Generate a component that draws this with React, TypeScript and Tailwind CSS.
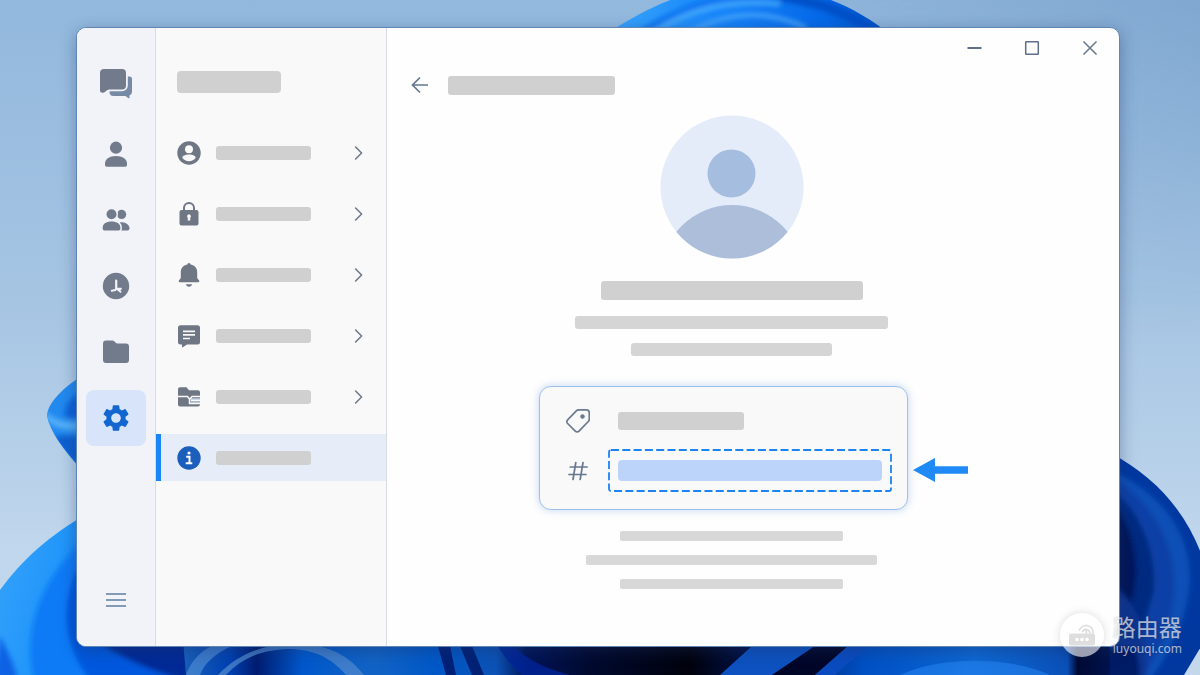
import React from "react";
import { MdSettings } from "react-icons/md";

function Wallpaper() {
  return (
    <svg
      className="absolute inset-0 h-full w-full"
      viewBox="0 0 1200 675"
      preserveAspectRatio="xMidYMid slice"
      aria-hidden="true"
    >
      <defs>
        <linearGradient id="sky" x1="0" y1="0" x2="0" y2="1">
          <stop offset="0" stopColor="#92b8dd" />
          <stop offset="0.45" stopColor="#a6c5e3" />
          <stop offset="0.8" stopColor="#bfd6ec" />
          <stop offset="1" stopColor="#c4d8ec" />
        </linearGradient>
        <linearGradient id="skyRight" x1="0" y1="0" x2="1" y2="0">
          <stop offset="0.6" stopColor="#6d98c4" stopOpacity="0" />
          <stop offset="1" stopColor="#6d98c4" stopOpacity="0.5" />
        </linearGradient>
        <linearGradient id="skyFade" x1="0" y1="0" x2="0" y2="1">
          <stop offset="0" stopColor="#fff" />
          <stop offset="0.5" stopColor="#000" />
        </linearGradient>
        <mask id="skyMask">
          <rect width="1200" height="675" fill="url(#skyFade)" />
        </mask>
        <filter id="soft" x="-10%" y="-10%" width="120%" height="120%">
          <feGaussianBlur stdDeviation="2.5" />
        </filter>
        <clipPath id="topClip">
          <path d="M606 34C650 6 690-14 748-14C806-14 850 2 892 36Z" />
        </clipPath>
        <clipPath id="leftClip">
          <path d="M0 590C22 560 48 536 90 512L240 640V675H0Z" />
        </clipPath>
        <clipPath id="budClip">
          <path d="M80 377C60 390 47 405 47 416C50 432 64 450 80 468Z" />
        </clipPath>
        <clipPath id="rightClip">
          <path d="M1110 453C1155 476 1186 512 1202 556V645L1184 675H1110Z" />
        </clipPath>
        <linearGradient id="top" x1="0" y1="0" x2="1" y2="0">
          <stop offset="0" stopColor="#3ba8fc" />
          <stop offset="0.4" stopColor="#1684fa" />
          <stop offset="0.75" stopColor="#0468e8" />
          <stop offset="1" stopColor="#0050b8" />
        </linearGradient>
        <linearGradient id="left" x1="0" y1="0" x2="1" y2="0.2">
          <stop offset="0" stopColor="#37a4fb" />
          <stop offset="0.3" stopColor="#2296fa" />
          <stop offset="0.7" stopColor="#0058de" />
          <stop offset="1" stopColor="#002890" />
        </linearGradient>
        <linearGradient id="floor" x1="180" y1="0" x2="1200" y2="0" gradientUnits="userSpaceOnUse">
          <stop offset="0" stopColor="#1a62bc" />
          <stop offset="0.05" stopColor="#0040b0" />
          <stop offset="0.075" stopColor="#001c70" />
          <stop offset="0.12" stopColor="#0058cc" />
          <stop offset="0.19" stopColor="#1263c4" />
          <stop offset="0.25" stopColor="#0058c8" />
          <stop offset="0.31" stopColor="#0c52b4" />
          <stop offset="0.34" stopColor="#001458" />
          <stop offset="0.4" stopColor="#000a30" />
          <stop offset="0.5" stopColor="#00020c" />
          <stop offset="0.56" stopColor="#00124c" />
          <stop offset="0.67" stopColor="#0050c4" />
          <stop offset="0.78" stopColor="#0d68d4" />
          <stop offset="0.87" stopColor="#0a50b8" />
          <stop offset="0.88" stopColor="#000a34" />
          <stop offset="0.93" stopColor="#00185c" />
          <stop offset="1" stopColor="#0038a0" />
        </linearGradient>
      </defs>
      <rect width="1200" height="675" fill="url(#sky)" />
      <rect width="1200" height="675" fill="url(#skyRight)" mask="url(#skyMask)" />

      <g clipPath="url(#topClip)">
        <rect x="600" y="-20" width="300" height="60" fill="url(#top)" />
        <g filter="url(#soft)" fill="none">
          <path d="M640 34C680 6 720-6 770-4" stroke="#0a74f0" strokeWidth="6" />
          <path d="M650 34C690 8 730 0 780 4" stroke="#48adfc" strokeWidth="4" />
          <path d="M690 32C730 10 770 10 806 28" stroke="#48a6fa" strokeWidth="4" />
          <path d="M780-4C830 4 860 18 886 40" stroke="#0050c8" strokeWidth="10" />
        </g>
      </g>

      <g clipPath="url(#budClip)">
        <rect x="44" y="370" width="40" height="100" fill="#2289ee" />
        <g filter="url(#soft)">
          <path d="M80 392C68 400 62 410 66 418H84Z" fill="#0a62d8" />
          <path d="M44 418C56 430 68 431 84 429V422C68 424 54 420 46 412Z" fill="#55b0f8" />
          <path d="M54 436C66 436 74 434 84 438V470C68 458 60 448 54 436Z" fill="#0a5ed0" />
        </g>
      </g>

      <g clipPath="url(#leftClip)">
        <rect y="500" width="240" height="180" fill="url(#left)" />
        <g filter="url(#soft)">
          <path d="M84 540C40 580 22 630 34 680H200C120 660 74 620 84 540Z" fill="#0a7af6" />
          <path d="M84 555C58 600 62 645 90 680H240L200 640H90Z" fill="#0058de" />
          <path d="M95 640C130 664 160 672 180 680H245V636Z" fill="#002a96" />
          <path d="M0 636C8 652 14 664 18 680H-5Z" fill="#0a62e4" />
        </g>
      </g>

      <path d="M183 640H1120V675H186Z" fill="url(#floor)" />
      <path d="M186 675C190 664 198 652 212 646H232C214 654 204 664 200 675Z" fill="#4684d0" opacity="0.8" />
      <path d="M218 675C238 654 262 645 290 644H300C336 646 352 660 364 675H346C330 656 312 650 292 649C262 649 242 658 226 675Z" fill="#4a84cc" opacity="0.8" />
      <path d="M498 646C506 660 514 668 522 675H570C544 668 524 658 514 646Z" fill="#00249a" opacity="0.8" />
      <path d="M438 646L446 675H456L450 646ZM460 646L472 675H484L472 646Z" fill="#001464" opacity="0.8" />
      <path d="M720 675L752 646H815L772 675Z" fill="#0d52c0" />
      <path d="M772 675L815 646H848L815 675Z" fill="#000628" />
      <path d="M815 675L848 646H868L835 675Z" fill="#0a4cc0" />
      <path d="M900 675C940 656 1010 656 1050 675Z" fill="#2a8af6" opacity="0.5" />

      <g clipPath="url(#rightClip)">
        <rect x="1105" y="440" width="100" height="240" fill="#0038a0" />
        <g filter="url(#soft)">
          <path d="M1110 470C1160 492 1190 530 1190 580C1188 620 1168 655 1150 680H1110Z" fill="#0d4fb6" />
          <path d="M1110 476C1150 500 1176 540 1174 590C1172 625 1160 655 1140 680H1110Z" fill="#0840a6" />
          <path d="M1110 488C1140 510 1156 550 1154 590L1140 640H1110Z" fill="#002a80" />
          <path d="M1110 500C1134 524 1142 570 1130 606H1110Z" fill="#001258" />
          <path d="M1112 584C1138 605 1150 630 1146 680H1105V646Z" fill="#0a3490" />
          <path d="M1100 648H1134C1140 660 1140 670 1138 684H1100Z" fill="#001c66" />
        </g>
      </g>
    </svg>
  );
}

function ChatsIcon() {
  return (
    <svg className="h-8 w-8" viewBox="0 0 32 32" aria-hidden="true">
      <path
        d="M12 9.500h17.500a2.500 2.500 0 0 1 2.500 2.500v13a4 4 0 0 1-2.500 3.600v1.800c0 .8-.8 1.200-1.400.7L25.500 29H13.500a4 4 0 0 1-4-3.500z"
        fill="#778aa5"
      />
      <path
        d="M4 2h18a4 4 0 0 1 4 4v12.500a4 4 0 0 1-4 4H9.500c-2 0-3 1-4.300 2.300-.9.900-1.700 1-2.700 1C1.200 25.800 0 24.800 0 23.500V6a4 4 0 0 1 4-4z"
        fill="#727b8b"
        stroke="#f1f3f8"
        strokeWidth="3.600"
        paintOrder="stroke"
      />
    </svg>
  );
}

function PersonIcon() {
  return (
    <svg className="h-7 w-7" viewBox="0 0 28 28" fill="currentColor" aria-hidden="true">
      <circle cx="14" cy="7.700" r="6.100" />
      <path d="M3 23.500c0-4.500 4.500-7.500 11-7.500s11 3 11 7.500V25a1.800 1.800 0 0 1-1.800 1.800H4.800A1.800 1.800 0 0 1 3 25z" />
    </svg>
  );
}

function PeopleIcon() {
  return (
    <svg className="h-7 w-7" viewBox="0 0 28 28" fill="currentColor" aria-hidden="true">
      <circle cx="19.600" cy="8.400" r="4.600" />
      <path d="M18 24.500v-8c5.500-1 9.500 2.500 9.500 6a2 2 0 0 1-2 2z" />
      <g stroke="#f1f3f8" strokeWidth="3" paintOrder="stroke">
        <circle cx="9.500" cy="8.200" r="5" />
        <path d="M.7 21.500c0-3.700 3.600-6 8.800-6s8.900 2.300 8.900 6v1.200a1.800 1.800 0 0 1-1.800 1.800H2.500a1.800 1.800 0 0 1-1.800-1.800z" />
      </g>
    </svg>
  );
}

function ClockIcon() {
  return (
    <svg className="h-7 w-7" viewBox="0 0 28 28" aria-hidden="true">
      <circle cx="14" cy="14" r="13.200" fill="currentColor" />
      <g fill="none" stroke="#f1f3f8" strokeLinecap="round">
        <path d="M14.200 8.500v8.300h4.600" strokeWidth="2.200" />
        <path d="M9.800 18.700l3.600-.6M15 16.800l3.500 3" strokeWidth="2" />
      </g>
    </svg>
  );
}

function FolderIcon() {
  return (
    <svg className="h-7 w-7" viewBox="0 0 28 28" aria-hidden="true">
      <path
        d="M4 2.500h6.300c.9 0 1.600.3 2.200.9l1.300 1.400c.4.400.9.700 1.500.7H24a3 3 0 0 1 3 3V22a3 3 0 0 1-3 3H4a3 3 0 0 1-3-3V5.500a3 3 0 0 1 3-3z"
        fill="currentColor"
      />
    </svg>
  );
}

function MenuIcon() {
  return (
    <svg className="h-5 w-5" viewBox="0 0 20 20" aria-hidden="true">
      <path d="M0 4h20M0 10h20M0 16h20" stroke="#8299ba" strokeWidth="1.800" />
    </svg>
  );
}

function AccountIcon() {
  return (
    <svg className="h-6 w-6" viewBox="0 0 24 24" aria-hidden="true">
      <circle cx="12" cy="12" r="11.700" fill="currentColor" />
      <circle cx="12" cy="8.300" r="4" fill="#f9f9f9" />
      <path d="M5.300 16.800c0-2 3-3.300 6.700-3.300s6.700 1.300 6.700 3.300c-1.500 2.200-3.900 3.400-6.700 3.400s-5.200-1.200-6.700-3.400z" fill="#f9f9f9" />
    </svg>
  );
}

function LockIcon() {
  return (
    <svg className="h-6 w-6" viewBox="0 0 24 24" aria-hidden="true">
      <path d="M7 10V6a5 5 0 0 1 10 0V10" fill="none" stroke="currentColor" strokeWidth="2" />
      <rect x="2.500" y="8" width="19" height="15.500" rx="2" fill="currentColor" />
      <path d="M12 12.300a2 2 0 0 1 1.100 3.600l.3 2.600h-2.800l.3-2.600A2 2 0 0 1 12 12.300z" fill="#f9f9f9" />
    </svg>
  );
}

function BellIcon() {
  return (
    <svg className="h-6 w-6" viewBox="0 0 24 24" aria-hidden="true">
      <path
        d="M12 .1a1.700 1.700 0 0 1 1.700 1.500C17.900 2.500 20.200 5.500 20.200 9.300v5.700l1.900 2.600c.5.800.1 1.700-.8 1.700H2.700c-.9 0-1.300-.9-.8-1.700L3.800 15V9.300c0-3.800 2.300-6.800 6.500-7.700A1.700 1.700 0 0 1 12 .1z"
        fill="currentColor"
      />
      <path d="M8.800 21.300h6.400c-.5 1.600-1.700 2.500-3.200 2.500s-2.700-.9-3.200-2.500z" fill="currentColor" />
    </svg>
  );
}

function MessageIcon() {
  return (
    <svg className="h-6 w-6" viewBox="0 0 24 24" aria-hidden="true">
      <path
        d="M3.500 1.200h17A2.500 2.500 0 0 1 23 3.700v14.300a2.500 2.500 0 0 1-2.500 2.500H10L5.800 23.300c-.6.400-.8.100-.8-.5v-2.300H3.500A2.500 2.500 0 0 1 1 18V3.700a2.500 2.500 0 0 1 2.500-2.500z"
        fill="currentColor"
      />
      <path d="M6 7.300h12M6 10.900h12M6 14.500h7" stroke="#f9f9f9" strokeWidth="1.700" />
    </svg>
  );
}

function FilesIcon() {
  return (
    <svg className="h-6 w-6" viewBox="0 0 24 24" aria-hidden="true">
      <path
        d="M1 4.200A2 2 0 0 1 3 2.200h6.500l2.500 3h9a2 2 0 0 1 2 2V19.500a2 2 0 0 1-2 2H3a2 2 0 0 1-2-2z"
        fill="currentColor"
      />
      <path d="M13.500 13h9.500v5H13.500z" fill="#a9b6ca" />
      <path d="M0 11.500h10.500l2 2.500v4.500h11M12.500 14.500l2.500-3h9M14 15.300h9" fill="none" stroke="#f9f9f9" strokeWidth="1.500" />
    </svg>
  );
}

function InfoIcon() {
  return (
    <svg className="h-6 w-6" viewBox="0 0 24 24" aria-hidden="true">
      <circle cx="12" cy="12" r="11.700" fill="#1b5ebc" />
      <circle cx="12" cy="7" r="1.600" fill="#fff" />
      <path d="M9.200 10.800h3.300v6.200M8.700 17.200h6.600" fill="none" stroke="#fff" strokeWidth="2" />
    </svg>
  );
}

function ChevronIcon() {
  return (
    <svg className="h-4 w-4" viewBox="0 0 16 16" aria-hidden="true">
      <path d="M4.600 2 10.600 8l-6 6" fill="none" stroke="#6f7b8e" strokeWidth="1.600" strokeLinecap="round" strokeLinejoin="round" />
    </svg>
  );
}

function TagIcon() {
  return (
    <svg className="h-6 w-6" viewBox="0 0 24 24" aria-hidden="true">
      <path
        d="M12.700.9h7.600a3 3 0 0 1 3 3V10a3.500 3.500 0 0 1-1 2.500l-9.300 9.700a2.600 2.600 0 0 1-3.700 0L1.600 14.500a2.600 2.600 0 0 1 0-3.700l8.700-8.900A3.400 3.400 0 0 1 12.700.9z"
        fill="none"
        stroke="#6b7a8f"
        strokeWidth="1.700"
      />
      <circle cx="16.500" cy="7.500" r="2.200" fill="#6b7a8f" />
    </svg>
  );
}

function HashIcon() {
  return (
    <svg className="h-5 w-5" viewBox="0 0 20 20" aria-hidden="true">
      <path
        d="M7.800 1.500 5 18.500M15 1.500 12.200 18.500M2.200 6h17M1 13.500h17"
        fill="none"
        stroke="#66788f"
        strokeWidth="1.700"
        strokeLinecap="round"
      />
    </svg>
  );
}

function RouterIcon() {
  return (
    <svg className="h-7 w-7" viewBox="0 0 28 28" aria-hidden="true">
      <g fill="none" stroke="#dcdcdc" strokeWidth="1.700" strokeLinecap="round">
        <path d="M11.500 9a7 7 0 0 1 13.500 3M14.500 10.500a4 4 0 0 1 7.500 1.500" />
        <path d="M18.300 9.500v4" />
      </g>
      <rect x="1" y="12.500" width="26" height="12" rx="2" fill="#dedede" />
      <g fill="#fff">
        <circle cx="9" cy="18.500" r="1.800" />
        <circle cx="14" cy="18.500" r="1.800" />
        <circle cx="19" cy="18.500" r="1.800" />
      </g>
    </svg>
  );
}

function Rail() {
  const items = [
    { label: "Contacts", icon: <PersonIcon /> },
    { label: "Groups", icon: <PeopleIcon /> },
    { label: "Recent", icon: <ClockIcon /> },
    { label: "Files", icon: <FolderIcon /> },
    { label: "Settings", icon: <MdSettings className="h-8 w-8" />, active: true },
  ];
  return (
    <nav
      aria-label="Main"
      className="flex w-[79px] shrink-0 flex-col items-center border-r border-[#d9dce4] bg-[#f1f3f8] pt-[39px] pb-6 text-[#727b8b]"
    >
      <button type="button" aria-label="Chats" className="mb-[27px]">
        <ChatsIcon />
      </button>
      <div className="flex flex-col gap-[10px]">
        {items.map((item) => (
          <button
            key={item.label}
            type="button"
            aria-label={item.label}
            className={
              item.active
                ? "flex h-14 w-[60px] items-center justify-center rounded-lg bg-[#d8e4fa] text-[#1266d0]"
                : "flex h-14 w-[60px] items-center justify-center rounded-lg"
            }
          >
            {item.icon}
          </button>
        ))}
      </div>
      <button type="button" aria-label="Menu" className="mt-auto flex h-11 w-[60px] items-center justify-center">
        <MenuIcon />
      </button>
    </nav>
  );
}

function SettingsList() {
  const rows = [
    { label: "Account", icon: <AccountIcon /> },
    { label: "Privacy", icon: <LockIcon /> },
    { label: "Notifications", icon: <BellIcon /> },
    { label: "Messages", icon: <MessageIcon /> },
    { label: "Storage", icon: <FilesIcon /> },
    { label: "About", icon: <InfoIcon />, active: true },
  ];
  return (
    <section
      aria-label="Settings"
      className="flex w-[231px] shrink-0 flex-col border-r border-[#d9dce4] bg-[#f9f9f9] pt-[43px] text-[#6f7684]"
    >
      <div className="mb-9 ml-[21px] h-[22px] w-[104px] rounded bg-[#d0d0d0]" />
      <div className="flex flex-col gap-[14px]">
        {rows.map((row) => (
          <button
            key={row.label}
            type="button"
            aria-label={row.label}
            className={
              row.active
                ? "flex h-[47px] items-center gap-[15px] border-l-[5px] border-[#1a86f5] bg-[#e7edf8] pr-[19px] pl-4"
                : "flex h-[47px] items-center gap-[15px] border-l-[5px] border-transparent pr-[19px] pl-4"
            }
          >
            {row.icon}
            <span className="h-[14px] w-[95px] rounded-[3px] bg-[#d0d0d0]" />
            {!row.active && (
              <span className="ml-auto">
                <ChevronIcon />
              </span>
            )}
          </button>
        ))}
      </div>
    </section>
  );
}

function WindowControls() {
  return (
    <div className="flex h-10 justify-end">
      <button type="button" aria-label="Minimize" className="flex w-[58px] items-center justify-center">
        <svg className="h-4 w-4" viewBox="0 0 16 16" aria-hidden="true">
          <path d="M1.500 8h14" stroke="#5e718c" strokeWidth="1.800" />
        </svg>
      </button>
      <button type="button" aria-label="Maximize" className="flex w-[58px] items-center justify-center">
        <svg className="h-4 w-4" viewBox="0 0 16 16" aria-hidden="true">
          <rect x="1.700" y="1.700" width="12.600" height="12.600" rx="0.500" fill="none" stroke="#5e6f88" strokeWidth="1.500" />
        </svg>
      </button>
      <button type="button" aria-label="Close" className="flex w-[58px] items-center justify-center">
        <svg className="h-4 w-4" viewBox="0 0 16 16" aria-hidden="true">
          <path d="M1.500 1.500l13 13M14.500 1.500l-13 13" stroke="#69778c" strokeWidth="1.500" />
        </svg>
      </button>
    </div>
  );
}

function Avatar() {
  return (
    <svg className="h-36 w-36" viewBox="0 0 144 144" role="img" aria-label="Avatar">
      <defs>
        <clipPath id="avatarClip">
          <circle cx="72" cy="72" r="71.500" />
        </clipPath>
      </defs>
      <g clipPath="url(#avatarClip)">
        <rect width="144" height="144" fill="#e5ecf9" />
        <circle cx="71.500" cy="58.500" r="24" fill="#a5bddf" />
        <circle cx="72" cy="161" r="71" fill="#adbedb" />
      </g>
    </svg>
  );
}

function IdCard() {
  return (
    <div className="flex items-center justify-center gap-[5px]">
      <div className="grid w-[369px] grid-cols-[24px_1fr] items-center gap-x-[18px] rounded-xl border border-[#9cc0ee] bg-[#f9f9fa] pt-[12px] pr-[15px] pb-[17px] pl-[26px] shadow-[0_0_8px_rgba(120,165,225,0.45)]">
        <TagIcon />
        <div className="flex h-[43px] items-center pl-[10px]">
          <div className="h-[18px] w-[126px] rounded-[3px] bg-[#d0d0d0]" />
        </div>
        <div className="mt-[7px] flex justify-center">
          <HashIcon />
        </div>
        <div className="relative mt-[7px] flex h-[43px] items-center px-[10px]">
          <div className="h-[21px] flex-1 rounded bg-[#bcd4fa]" />
          <svg className="absolute inset-px h-[41px] w-[calc(100%-2px)] overflow-visible" aria-hidden="true">
            <rect
              width="100%"
              height="100%"
              rx="2"
              fill="none"
              stroke="#1c84f2"
              strokeWidth="1.800"
              strokeDasharray="8 3.300"
            />
          </svg>
        </div>
      </div>
      <svg className="mt-[43px] h-6 w-[55px] shrink-0" viewBox="0 0 55 24" aria-hidden="true">
        <path d="M0 12 22 0v8.200h33v7.600H22V24z" fill="#1f89f6" />
      </svg>
    </div>
  );
}

function Watermark() {
  return (
    <div className="absolute right-[18px] bottom-[18px] flex items-center gap-[9px] font-['Noto_Sans','Noto_Sans_CJK_SC',sans-serif]">
      <div className="flex h-11 w-11 items-center justify-center rounded-full bg-white/60 shadow-[0_0_10px_rgba(0,0,0,0.14)]">
        <RouterIcon />
      </div>
      <div className="flex flex-col text-white/65 [text-shadow:0_0_2px_rgba(0,0,0,0.25)]">
        <span className="text-[23px] leading-7">路由器</span>
        <span className="text-xs leading-4">luyouqi.com</span>
      </div>
    </div>
  );
}

export default function App() {
  return (
    <div className="relative flex min-h-screen overflow-hidden bg-[#a6c5e3] pt-[27px] pr-20 pb-7 pl-[76px] font-['Noto_Sans',sans-serif]">
      <Wallpaper />
      <div className="relative flex flex-1 overflow-hidden rounded-[10px] border border-[#6286b4] bg-[#fefefe] shadow-[0_4px_16px_rgba(30,50,100,0.4)]">
        <Rail />
        <SettingsList />
        <main className="flex flex-1 flex-col">
          <WindowControls />
          <div className="flex h-[34px] items-center gap-[19px] pl-6">
            <button type="button" aria-label="Back">
              <svg className="h-[18px] w-[18px]" viewBox="0 0 18 18" aria-hidden="true">
                <path d="M17 9H1.500M9 1.500 1.500 9l7.500 7.500" fill="none" stroke="#66778e" strokeWidth="1.700" />
              </svg>
            </button>
            <div className="h-[19px] w-[167px] rounded-[3px] bg-[#d0d0d0]" />
          </div>
          <div className="mt-[13px] flex flex-col items-center pr-[43px]">
            <Avatar />
            <div className="mt-[22px] h-[19px] w-[262px] rounded-[3px] bg-[#d0d0d0]" />
            <div className="mt-4 h-[13px] w-[313px] rounded-[3px] bg-[#d5d5d5]" />
            <div className="mt-[14px] h-[13px] w-[201px] rounded-[3px] bg-[#d5d5d5]" />
          </div>
          <div className="mt-[30px] mb-[21px]">
            <IdCard />
          </div>
          <div className="flex flex-col items-center gap-[14px] pr-[43px]">
            <div className="h-[10px] w-[223px] rounded-[2px] bg-[#d8d8d8]" />
            <div className="h-[10px] w-[291px] rounded-[2px] bg-[#d8d8d8]" />
            <div className="h-[10px] w-[223px] rounded-[2px] bg-[#d8d8d8]" />
          </div>
        </main>
      </div>
      <Watermark />
    </div>
  );
}
